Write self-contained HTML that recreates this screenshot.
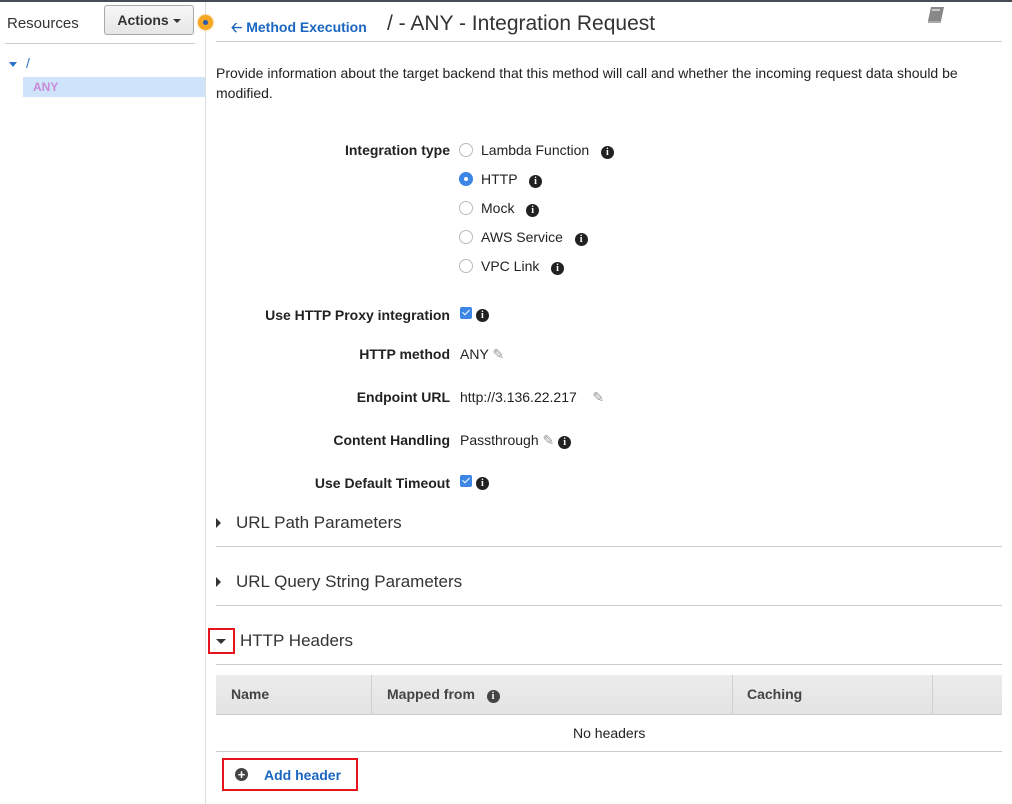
<!DOCTYPE html>
<html><head><meta charset="utf-8"><style>
*{margin:0;padding:0;box-sizing:border-box}
body{width:1012px;height:804px;overflow:hidden;background:#fff;font-family:"Liberation Sans",Arial,sans-serif;font-size:14px;color:#222;position:relative}
.a{position:absolute;white-space:nowrap}
.lbl{position:absolute;right:562px;font-weight:bold;color:#222;white-space:nowrap}
.info{display:inline-block;width:13px;height:13px;border-radius:50%;background:#222;color:#fff;font:bold 10px/13px "Liberation Serif",serif;text-align:center;vertical-align:0px}
.radio{display:inline-block;width:14px;height:14px;border-radius:50%;border:1px solid #bbb;background:#fff;position:absolute;left:459px}
.chk{display:inline-block;width:12px;height:12px;border-radius:2px;background:#3d86e6;position:relative;vertical-align:-1px}
.chk:after{content:"";position:absolute;left:4px;top:1px;width:3px;height:6px;border:solid #fff;border-width:0 1.5px 1.5px 0;transform:rotate(45deg)}
.hr{position:absolute;height:1px;background:#ccc}
.sec{position:absolute;font-size:17px;color:#333;left:236px}
.tri{position:absolute;width:0;height:0;border-top:5px solid transparent;border-bottom:5px solid transparent;border-left:5px solid #333}
</style></head><body>
<div class="a" style="left:0;top:0;width:1012px;height:2px;background:#474d55"></div>
<div class="a" style="left:205px;top:2px;width:1px;height:802px;background:#ddd"></div>
<div class="a" style="left:7px;top:15px;font-size:15px;color:#333">Resources</div>
<div class="a" style="left:104px;top:5px;width:90px;height:30px;border:1px solid #aaa;border-radius:3px;background:linear-gradient(#f7f7f7,#e6e6e6);font-weight:bold;font-size:14px;color:#333;text-align:center;line-height:28px">Actions <span style="display:inline-block;border-left:4px solid transparent;border-right:4px solid transparent;border-top:4px solid #333;vertical-align:2px"></span></div>
<div class="a" style="left:198px;top:15px;width:15px;height:15px;border-radius:50%;background:#f5a623;box-shadow:0 0 2px #f5a623"><div style="position:absolute;left:5px;top:5px;width:5px;height:5px;border-radius:50%;background:#2a5aa8"></div></div>
<div class="hr" style="left:5px;top:43px;width:190px"></div>
<div class="a" style="left:9px;top:62px;border-left:4px solid transparent;border-right:4px solid transparent;border-top:5px solid #2a73c5"></div>
<div class="a" style="left:26px;top:55px;color:#2a73c5;font-size:14px">/</div>
<div class="a" style="left:23px;top:77px;width:182px;height:20px;background:#cfe4fa"></div>
<div class="a" style="left:33px;top:80px;font-weight:bold;font-size:12px;color:#c88ad8">ANY</div>
<div class="a" style="left:231px;top:17px;font-weight:bold;font-size:14px;color:#1a66c0">&#129120; Method Execution</div>
<div class="a" style="left:387px;top:12px;font-size:21px;color:#333">/ - ANY - Integration Request</div>
<svg class="a" style="left:926px;top:6px" width="20" height="18" viewBox="0 0 20 18"><path d="M5 1h13l-3 14H2z" fill="#888"/><path d="M2 15h13v2H2z" fill="#aaa"/><path d="M6 4h8" stroke="#eee" stroke-width="1.3"/></svg>
<div class="hr" style="left:216px;top:41px;width:786px"></div>
<div class="a" style="left:216px;top:63px;line-height:20px;white-space:normal;width:780px;color:#222">Provide information about the target backend that this method will call and whether the incoming request data should be modified.</div>
<div class="lbl" style="top:142px">Integration type</div>
<div class="radio" style="top:143px"></div><div class="a" style="left:481px;top:142px">Lambda Function &nbsp;&nbsp;<span class="info">i</span></div>
<div class="radio" style="top:172px;border:none;background:#3d86e6"><div style="position:absolute;left:5px;top:5px;width:4px;height:4px;border-radius:50%;background:#fff"></div></div><div class="a" style="left:481px;top:171px">HTTP &nbsp;&nbsp;<span class="info">i</span></div>
<div class="radio" style="top:201px"></div><div class="a" style="left:481px;top:200px">Mock &nbsp;&nbsp;<span class="info">i</span></div>
<div class="radio" style="top:230px"></div><div class="a" style="left:481px;top:229px">AWS Service &nbsp;&nbsp;<span class="info">i</span></div>
<div class="radio" style="top:259px"></div><div class="a" style="left:481px;top:258px">VPC Link &nbsp;&nbsp;<span class="info">i</span></div>
<div class="lbl" style="top:307px">Use HTTP Proxy integration</div>
<div class="a" style="left:460px;top:305px"><span class="chk"></span> <span class="info">i</span></div>
<div class="lbl" style="top:346px">HTTP method</div>
<div class="a" style="left:460px;top:346px">ANY <span style="color:#999">&#9998;</span></div>
<div class="lbl" style="top:389px">Endpoint URL</div>
<div class="a" style="left:460px;top:389px">http://3.136.22.217 &nbsp;&nbsp;&nbsp;<span style="color:#999">&#9998;</span></div>
<div class="lbl" style="top:432px">Content Handling</div>
<div class="a" style="left:460px;top:432px">Passthrough <span style="color:#999">&#9998;</span> <span class="info">i</span></div>
<div class="lbl" style="top:475px">Use Default Timeout</div>
<div class="a" style="left:460px;top:473px"><span class="chk"></span> <span class="info">i</span></div>
<div class="tri" style="left:216px;top:518px"></div><div class="sec" style="top:513px">URL Path Parameters</div>
<div class="hr" style="left:216px;top:546px;width:786px"></div>
<div class="tri" style="left:216px;top:577px"></div><div class="sec" style="top:572px">URL Query String Parameters</div>
<div class="hr" style="left:216px;top:605px;width:786px"></div>
<div class="a" style="left:208px;top:628px;width:27px;height:26px;border:2px solid #e8141c"></div>
<div class="a" style="left:216px;top:639px;border-left:5px solid transparent;border-right:5px solid transparent;border-top:5px solid #333"></div>
<div class="sec" style="top:631px;left:240px">HTTP Headers</div>
<div class="hr" style="left:216px;top:664px;width:786px"></div>
<div class="a" style="left:216px;top:675px;width:786px;height:40px;background:linear-gradient(#ececec,#e3e3e3);border-bottom:1px solid #ccc"></div>
<div class="a" style="left:371px;top:675px;width:1px;height:39px;background:#d0d0d0"></div>
<div class="a" style="left:732px;top:675px;width:1px;height:39px;background:#d0d0d0"></div>
<div class="a" style="left:932px;top:675px;width:1px;height:39px;background:#d0d0d0"></div>
<div class="a" style="left:231px;top:686px;font-weight:bold;color:#444">Name</div>
<div class="a" style="left:387px;top:686px;font-weight:bold;color:#444">Mapped from &nbsp;&nbsp;<span class="info" style="background:#444">i</span></div>
<div class="a" style="left:747px;top:686px;font-weight:bold;color:#444">Caching</div>
<div class="a" style="left:573px;top:725px">No headers</div>
<div class="hr" style="left:216px;top:751px;width:786px"></div>
<div class="a" style="left:222px;top:758px;width:136px;height:33px;border:2px solid #e8141c"></div>
<div class="a" style="left:235px;top:768px;width:13px;height:13px;border-radius:50%;background:#444;color:#fff;font:bold 13px/13px 'Liberation Sans';text-align:center">+</div>
<div class="a" style="left:264px;top:767px;font-weight:bold;color:#1a66c0">Add header</div>
</body></html>
